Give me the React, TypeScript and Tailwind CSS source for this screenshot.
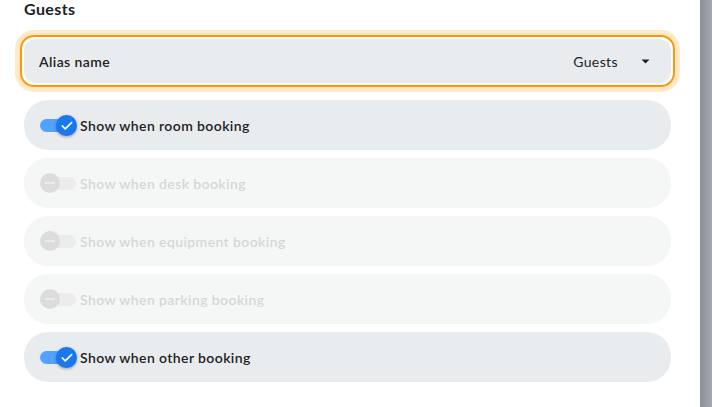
import { Check } from "lucide-react";

const rows = [
  { label: "Show when room booking", on: true },
  { label: "Show when desk booking", on: false },
  { label: "Show when equipment booking", on: false },
  { label: "Show when parking booking", on: false },
  { label: "Show when other booking", on: true },
];

const Toggle = ({ on }: { on: boolean }) => {
  if (on) {
    return (
      <div className="relative w-[36px] h-[20px] shrink-0">
        <div className="absolute left-0 top-[4px] w-[34px] h-[13px] rounded-full bg-[#54a2ff]" />
        <div className="absolute left-[16px] top-0 size-[21px] rounded-full bg-[#1a78ee] flex items-center justify-center shadow-[0_1px_3px_rgba(0,0,0,0.35)]">
          <Check className="size-[14px] text-white" strokeWidth={3} />
        </div>
      </div>
    );
  }
  return (
    <div className="relative w-[36px] h-[20px] shrink-0">
      <div className="absolute left-0 top-[4px] w-[36px] h-[13px] rounded-full bg-[#ececec]" />
      <div className="absolute left-0 top-0 size-[20px] rounded-full bg-[#dcdcdc] flex items-center justify-center">
        <div className="w-[10px] h-[1.5px] bg-[#ebebeb]" />
      </div>
    </div>
  );
};

export default function App() {
  return (
    <div className="flex w-[712px] h-[407px] overflow-hidden bg-white font-['Lato',sans-serif] tracking-[0.4px]">
      <div className="w-[700px] flex flex-col pl-[24px] pr-[29px]">
        <h2 className="text-[16px] font-bold text-[#202124] leading-[17px]">Guests</h2>
        <div className="mt-[18px] -mx-[4px] rounded-[14px] border-2 border-[#ff9800] p-[2px] shadow-[0_0_0_5px_#ffe9c8]">
          <div className="h-[44px] rounded-[12px] bg-[#e9ecef] flex items-center pl-[15px] pr-[21px]">
            <span className="text-[14px] font-semibold text-[#222]">Alias name</span>
            <span className="ml-auto text-[14px] text-[#222]">Guests</span>
            <svg className="ml-[23px]" width="9" height="5" viewBox="0 0 9 5">
              <path d="M0.5 0.5 L8.5 0.5 L4.5 4.5 Z" fill="#222" />
            </svg>
          </div>
        </div>
        <div className="mt-[13px] flex flex-col gap-[8px]">
          {rows.map((r) => (
            <div
              key={r.label}
              className={
                r.on
                  ? "h-[50px] rounded-[24px] bg-[#e9ecef] flex items-center pl-[16px] gap-[4px]"
                  : "h-[50px] rounded-[24px] bg-[#f5f6f6] flex items-center pl-[16px] gap-[4px]"
              }
            >
              <Toggle on={r.on} />
              <span
                className={
                  r.on
                    ? "text-[14px] font-semibold text-[#222]"
                    : "text-[14px] font-semibold text-[#d6d6d6]"
                }
              >
                {r.label}
              </span>
            </div>
          ))}
        </div>
      </div>
      <div className="w-[12px] h-full bg-gradient-to-r from-[#8b8f98] to-[#a4a8b0]" />
    </div>
  );
}
